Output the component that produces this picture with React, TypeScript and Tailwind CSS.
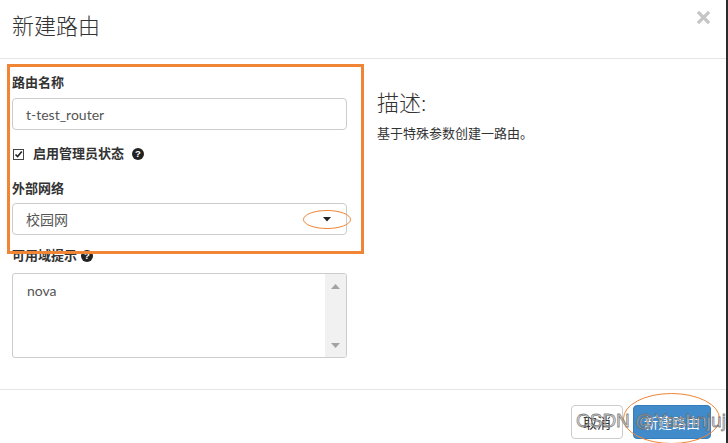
import React from "react";

const FONT = { fontFamily: '"Lato", "Open Sans", "Noto Sans CJK SC", sans-serif' };

function Help() {
  return (
    <svg width="12" height="12" viewBox="0 0 12 12" className="inline-block">
      <circle cx="6" cy="6" r="6" fill="#222" />
      <text x="6" y="9.3" textAnchor="middle" fontSize="9.5" fontWeight="700" fill="#fff" fontFamily="Liberation Sans, sans-serif">?</text>
    </svg>
  );
}

export default function App() {
  return (
    <div className="w-[728px] h-[443px] bg-white border-r-2 border-[#2b2b2b] relative overflow-hidden text-[#333]" style={FONT}>
      {/* Header */}
      <div className="h-[59px] border-b border-[#e5e5e5] flex justify-between pl-[12px] pr-[16px]">
        <div className="pt-[13px] text-[22px] leading-[26px] font-light text-[#333]">新建路由</div>
        <div className="pt-[11px]">
          <svg width="13" height="13" viewBox="0 0 13 13">
            <path d="M2 2 L11 11 M11 2 L2 11" stroke="#c6c6c6" strokeWidth="3.2" strokeLinecap="square" />
          </svg>
        </div>
      </div>

      {/* Body */}
      <div className="h-[330px] flex pt-[14px] pl-[12px]">
        <div className="w-[335px] flex flex-col">
          <div className="text-[13px] leading-[18px] font-bold">路由名称</div>
          <div className="mt-[7px] h-[32px] border border-[#ccc] rounded-[4px] flex items-center pl-[13px] text-[14px] text-[#555]">
            t-test_router
          </div>
          <div className="mt-[14px] h-[20px] flex items-center">
            <svg width="11" height="11" viewBox="0 0 11 11" className="ml-[1px]">
              <rect x="0.5" y="0.5" width="10" height="10" fill="#fff" stroke="#444" strokeWidth="1" />
              <path d="M2.5 5.5 L4.6 7.6 L8.8 2.6" stroke="#222" strokeWidth="1.6" fill="none" />
            </svg>
            <span className="ml-[9px] text-[13px] font-bold">启用管理员状态</span>
            <span className="ml-[8px] flex items-center"><Help /></span>
          </div>
          <div className="mt-[15px] text-[13px] leading-[18px] font-bold">外部网络</div>
          <div className="mt-[6px] h-[32px] border border-[#ccc] rounded-[4px] flex items-center justify-between pl-[13px] pr-[15px] text-[14px] text-[#555]">
            <span>校园网</span>
            <svg width="8" height="5" viewBox="0 0 8 5">
              <path d="M0 0 L8 0 L4 4.5 Z" fill="#222" />
            </svg>
          </div>
          <div className="mt-[12px] h-[18px] flex items-center gap-[4px]">
            <span className="text-[13px] font-bold">可用域提示</span>
            <Help />
          </div>
          <div className="mt-[8px] h-[85px] border border-[#ccc] rounded-[3px] flex overflow-hidden">
            <div className="flex-1 pl-[14px] pt-[8px] text-[14px] leading-[18px] text-[#555]">nova</div>
            <div className="w-[21px] bg-[#f1f1f1] flex flex-col items-center justify-between pt-[10px] pb-[9px]">
              <svg width="9" height="5" viewBox="0 0 9 5"><path d="M0 5 L9 5 L4.5 0 Z" fill="#a3a3a3" /></svg>
              <svg width="9" height="5" viewBox="0 0 9 5"><path d="M0 0 L9 0 L4.5 5 Z" fill="#a3a3a3" /></svg>
            </div>
          </div>
        </div>
        <div className="ml-[30px] flex flex-col">
          <div className="mt-[17px] text-[22px] leading-[26px] font-light text-[#333]">描述:</div>
          <div className="mt-[8px] text-[13px] leading-[18px] text-[#333]">基于特殊参数创建一路由。</div>
        </div>
      </div>

      {/* Footer */}
      <div className="border-t border-[#e5e5e5] flex justify-end pt-[15px] pr-[15px] gap-[10px]">
        <div className="h-[34px] px-[11px] border border-[#ccc] rounded-[4px] flex items-center text-[14px] text-[#333] bg-white">取消</div>
        <div className="h-[34px] px-[10px] border border-[#357ebd] rounded-[4px] flex items-center text-[14px] text-white bg-[#428bca]">新建路由</div>
      </div>

      {/* Annotations */}
      <div className="absolute left-[7px] top-[64px] w-[357px] h-[190px] border-[3px] border-[#ef8535] pointer-events-none" />
      <svg className="absolute left-0 top-0 pointer-events-none" width="728" height="443">
        <ellipse cx="327" cy="219.5" rx="23.5" ry="9" fill="none" stroke="#ef8535" strokeWidth="1" />
        <ellipse cx="671.5" cy="418.5" rx="48" ry="25" fill="none" stroke="#ef8535" strokeWidth="1" />
      </svg>
      <div
        className="absolute left-[576px] top-[408px] text-[19px] leading-[26px] pointer-events-none whitespace-nowrap"
        style={{ fontFamily: '"Liberation Sans", sans-serif', color: "rgba(215,215,215,0.7)", WebkitTextStroke: "0.8px rgba(95,95,95,0.75)" }}
      >
        CSDN @Yashnjuj
      </div>
    </div>
  );
}
